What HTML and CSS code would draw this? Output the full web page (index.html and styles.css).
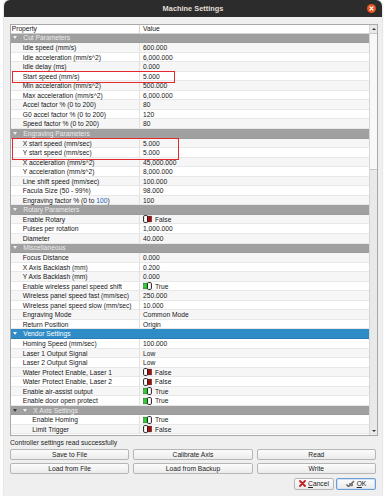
FILE: index.html
```html
<!DOCTYPE html>
<html lang="en">
<head>
    <meta charset="UTF-8">
    <title>Machine Settings</title>
    <link rel="stylesheet" href="styles.css">
</head>
<body>
    <div class="dialog">
        <div class="titlebar">
            <span></span>
            <span class="title">Machine Settings</span>
            <span class="close">
                <svg width="9" height="9" viewBox="0 0 9 9"><path d="M3 3 L6 6 M6 3 L3 6" stroke="#fff" stroke-width="1.2" stroke-linecap="round"/></svg>
            </span>
        </div>

        <div class="content">
            <div class="tree">
                <div class="rows">
                    <div class="row head"><div class="prop">Property</div><div class="val">Value</div></div>

                    <div class="row group"><i class="arrow"></i>Cut Parameters</div>
                    <div class="row"><div class="prop">Idle speed (mm/s)</div><div class="val">600.000</div></div>
                    <div class="row"><div class="prop">Idle acceleration (mm/s^2)</div><div class="val">6,000.000</div></div>
                    <div class="row"><div class="prop">Idle delay (ms)</div><div class="val">0.000</div></div>
                    <div class="row mark"><div class="prop">Start speed (mm/s)</div><div class="val">5.000</div></div>
                    <div class="row"><div class="prop">Min acceleration (mm/s^2)</div><div class="val">500.000</div></div>
                    <div class="row"><div class="prop">Max acceleration (mm/s^2)</div><div class="val">6,000.000</div></div>
                    <div class="row"><div class="prop">Accel factor % (0 to 200)</div><div class="val">80</div></div>
                    <div class="row"><div class="prop">G0 accel factor % (0 to 200)</div><div class="val">120</div></div>
                    <div class="row"><div class="prop">Speed factor % (0 to 200)</div><div class="val">80</div></div>

                    <div class="row group"><i class="arrow"></i>Engraving Parameters</div>
                    <div class="row mark2"><div class="prop">X start speed (mm/sec)</div><div class="val">5.000</div></div>
                    <div class="row"><div class="prop">Y start speed (mm/sec)</div><div class="val">5.000</div></div>
                    <div class="row"><div class="prop">X acceleration (mm/s^2)</div><div class="val">45,000.000</div></div>
                    <div class="row"><div class="prop">Y acceleration (mm/s^2)</div><div class="val">8,000.000</div></div>
                    <div class="row"><div class="prop">Line shift speed (mm/sec)</div><div class="val">100.000</div></div>
                    <div class="row"><div class="prop">Facula Size (50 - 99%)</div><div class="val">98.000</div></div>
                    <div class="row"><div class="prop">Engraving factor % (0 to <span class="num">100</span>)</div><div class="val">100</div></div>

                    <div class="row group"><i class="arrow"></i>Rotary Parameters</div>
                    <div class="row"><div class="prop">Enable Rotary</div><div class="val"><svg class="sw" width="9" height="8" viewBox="0 0 9 8"><rect x="0.6" y="0.6" width="4" height="6.8" rx="1" fill="#fff" stroke="#1c1c1c" stroke-width="1"/><rect x="4.6" y="1.2" width="3.8" height="5.6" fill="#9a1212" stroke="#4a0606" stroke-width="0.6"/></svg>False</div></div>
                    <div class="row"><div class="prop">Pulses per rotation</div><div class="val">1,000.000</div></div>
                    <div class="row"><div class="prop">Diameter</div><div class="val">40.000</div></div>

                    <div class="row group"><i class="arrow"></i>Miscellaneous</div>
                    <div class="row"><div class="prop">Focus Distance</div><div class="val">0.000</div></div>
                    <div class="row"><div class="prop">X Axis Backlash (mm)</div><div class="val">0.200</div></div>
                    <div class="row"><div class="prop">Y Axis Backlash (mm)</div><div class="val">0.000</div></div>
                    <div class="row"><div class="prop">Enable wireless panel speed shift</div><div class="val"><svg class="sw" width="9" height="8" viewBox="0 0 9 8"><rect x="0.6" y="1.2" width="3.8" height="5.6" fill="#2fcf2f" stroke="#187018" stroke-width="0.6"/><rect x="4.4" y="0.6" width="4" height="6.8" rx="1" fill="#fff" stroke="#1c1c1c" stroke-width="1"/></svg>True</div></div>
                    <div class="row"><div class="prop">Wireless panel speed fast (mm/sec)</div><div class="val">250.000</div></div>
                    <div class="row"><div class="prop">Wireless panel speed slow (mm/sec)</div><div class="val">10.000</div></div>
                    <div class="row"><div class="prop">Engraving Mode</div><div class="val">Common Mode</div></div>
                    <div class="row"><div class="prop">Return Position</div><div class="val">Origin</div></div>

                    <div class="row group selected"><i class="arrow"></i>Vendor Settings</div>
                    <div class="row"><div class="prop">Homing Speed (mm/sec)</div><div class="val">100.000</div></div>
                    <div class="row"><div class="prop">Laser 1 Output Signal</div><div class="val">Low</div></div>
                    <div class="row"><div class="prop">Laser 2 Output Signal</div><div class="val">Low</div></div>
                    <div class="row"><div class="prop">Water Protect Enable, Laser 1</div><div class="val"><svg class="sw" width="9" height="8" viewBox="0 0 9 8"><rect x="0.6" y="0.6" width="4" height="6.8" rx="1" fill="#fff" stroke="#1c1c1c" stroke-width="1"/><rect x="4.6" y="1.2" width="3.8" height="5.6" fill="#9a1212" stroke="#4a0606" stroke-width="0.6"/></svg>False</div></div>
                    <div class="row"><div class="prop">Water Protect Enable, Laser 2</div><div class="val"><svg class="sw" width="9" height="8" viewBox="0 0 9 8"><rect x="0.6" y="0.6" width="4" height="6.8" rx="1" fill="#fff" stroke="#1c1c1c" stroke-width="1"/><rect x="4.6" y="1.2" width="3.8" height="5.6" fill="#9a1212" stroke="#4a0606" stroke-width="0.6"/></svg>False</div></div>
                    <div class="row"><div class="prop">Enable air-assist output</div><div class="val"><svg class="sw" width="9" height="8" viewBox="0 0 9 8"><rect x="0.6" y="1.2" width="3.8" height="5.6" fill="#2fcf2f" stroke="#187018" stroke-width="0.6"/><rect x="4.4" y="0.6" width="4" height="6.8" rx="1" fill="#fff" stroke="#1c1c1c" stroke-width="1"/></svg>True</div></div>
                    <div class="row"><div class="prop">Enable door open protect</div><div class="val"><svg class="sw" width="9" height="8" viewBox="0 0 9 8"><rect x="0.6" y="1.2" width="3.8" height="5.6" fill="#2fcf2f" stroke="#187018" stroke-width="0.6"/><rect x="4.4" y="0.6" width="4" height="6.8" rx="1" fill="#fff" stroke="#1c1c1c" stroke-width="1"/></svg>True</div></div>

                    <div class="row group sub"><i class="arrow dark"></i><i class="arrow"></i>X Axis Settings</div>
                    <div class="row deep"><div class="prop">Enable Homing</div><div class="val"><svg class="sw" width="9" height="8" viewBox="0 0 9 8"><rect x="0.6" y="1.2" width="3.8" height="5.6" fill="#2fcf2f" stroke="#187018" stroke-width="0.6"/><rect x="4.4" y="0.6" width="4" height="6.8" rx="1" fill="#fff" stroke="#1c1c1c" stroke-width="1"/></svg>True</div></div>
                    <div class="row deep"><div class="prop">Limit Trigger</div><div class="val"><svg class="sw" width="9" height="8" viewBox="0 0 9 8"><rect x="0.6" y="0.6" width="4" height="6.8" rx="1" fill="#fff" stroke="#1c1c1c" stroke-width="1"/><rect x="4.6" y="1.2" width="3.8" height="5.6" fill="#9a1212" stroke="#4a0606" stroke-width="0.6"/></svg>False</div></div>
                </div>

                <div class="scrollbar">
                    <div class="sb-btn"><i class="up"></i></div>
                    <div class="thumb"></div>
                    <div class="track"></div>
                    <div class="sb-btn"><i class="down"></i></div>
                </div>
            </div>

            <div class="status">Controller settings read successfully</div>

            <div class="buttons">
                <button>Save to File</button>
                <button>Calibrate Axis</button>
                <button>Read</button>
                <button>Load from File</button>
                <button>Load from Backup</button>
                <button>Write</button>
            </div>

            <div class="dialog-buttons">
                <button class="icon-btn">
                    <svg width="7" height="7" viewBox="0 0 7 7"><path d="M1 1 L6 6 M6 1 L1 6" stroke="#c62020" stroke-width="1.8" stroke-linecap="round"/></svg>
                    <span><u>C</u>ancel</span>
                </button>
                <button class="icon-btn default">
                    <svg width="9" height="7" viewBox="0 0 9 7"><path d="M0.5 4.5 L2.5 6.5 L8 1" fill="none" stroke="#6a6a6a" stroke-width="1.6"/><rect x="3" y="3" width="4" height="3.2" rx="1" fill="#7a7a7a"/></svg>
                    <span><u>O</u>K</span>
                </button>
            </div>
        </div>
    </div>
</body>
</html>
```

FILE: styles.css
```css
* {
    box-sizing: border-box;
}
body {
    margin: 0;
    background: #fff;
    font-family: "Liberation Sans", Arial, sans-serif;
    font-size: 6.7px;
    color: #161616;
}
.dialog {
    width: 378px;
    height: 496px;
    margin-left: 4px;
    background: #efefef;
    border-radius: 6px 6px 0 0;
    box-shadow: 0 0 2px rgba(0,0,0,0.35);
    overflow: hidden;
    display: flex;
    flex-direction: column;
}
.titlebar {
    height: 17px;
    background: #2c2c2c;
    display: grid;
    grid-template-columns: 1fr auto 1fr;
    align-items: center;
}
.title {
    color: #e2ded6;
    font-weight: bold;
    font-size: 7.4px;
}
.close {
    justify-self: end;
    margin-right: 6px;
    width: 9px;
    height: 9px;
    border-radius: 50%;
    background: #e8561f;
    display: flex;
}
.content {
    padding: 7px 4px 0 6px;
    display: flex;
    flex-direction: column;
}
.tree {
    height: 412px;
    border: 1px solid #a9a9a9;
    background: #fff;
    display: flex;
}
.rows {
    flex: 1;
    display: flex;
    flex-direction: column;
}
.row {
    height: 9.55px;
    line-height: 9px;
    display: grid;
    grid-template-columns: 129px 1fr;
    border-bottom: 1px solid #e8e8e8;
    white-space: nowrap;
    position: relative;
}
.row:nth-child(odd) {
    background: #f6f6f6;
}
.prop {
    padding-left: 11.7px;
    border-right: 1px solid #e2e2e2;
    overflow: hidden;
}
.val {
    padding-left: 3px;
    display: flex;
    align-items: center;
}
.row.head {
    height: 8.5px;
    line-height: 8px;
    background: #fff;
    border-bottom: 1px solid #d2d2d2;
}
.row.head .prop {
    padding-left: 0.7px;
    border-right-color: #d6d6d6;
}
.row.deep .prop {
    padding-left: 21.3px;
}
.row.group {
    display: flex;
    align-items: center;
    background: #a0a0a0;
    color: #ececec;
    padding-left: 2.3px;
    border-bottom: 1px solid #9a9a9a;
}
.row.group.selected {
    background: #308cc6;
    color: #fff;
    border-bottom-color: #2a7db2;
}
.arrow {
    width: 0;
    height: 0;
    border-left: 2px solid transparent;
    border-right: 2px solid transparent;
    border-top: 3px solid #eeeeee;
    margin-right: 6px;
}
.arrow.dark {
    border-top-color: #3a3a3a;
}
.num {
    color: #1c5fb8;
}
.sw {
    margin-right: 3px;
}
.mark::after,
.mark2::after {
    content: "";
    position: absolute;
    z-index: 2;
    left: 1px;
    top: -0.5px;
    height: 10px;
    width: 161px;
    border: 1.6px solid #e5282b;
}
.mark2::after {
    width: 165px;
    height: 19.5px;
}
.scrollbar {
    width: 8px;
    background: #e9e9e9;
    border-left: 1px solid #d6d6d6;
    display: flex;
    flex-direction: column;
}
.sb-btn {
    height: 8px;
    display: flex;
    align-items: center;
    justify-content: center;
}
.up, .down {
    width: 0;
    height: 0;
    border-left: 2px solid transparent;
    border-right: 2px solid transparent;
}
.up {
    border-bottom: 2.5px solid #333;
}
.down {
    border-top: 2.5px solid #333;
}
.thumb {
    height: 137px;
    background: #f8f8f8;
    border-top: 1px solid #c8c8c8;
    border-bottom: 1px solid #c8c8c8;
}
.track {
    flex: 1;
}
.status {
    margin-top: 1.5px;
    height: 9px;
    line-height: 9px;
    color: #222;
}
button {
    font-family: inherit;
    font-size: 6.7px;
    color: #222;
    background: linear-gradient(#fcfcfc, #ebebeb);
    border: 1px solid #b6b6b6;
    border-radius: 2px;
    padding: 0;
}
.buttons {
    margin-top: 2.5px;
    margin-right: 2px;
    display: grid;
    grid-template-columns: repeat(3, 1fr);
    grid-auto-rows: 11px;
    column-gap: 4px;
    row-gap: 3px;
}
.dialog-buttons {
    margin-top: 3.5px;
    margin-right: 2px;
    display: flex;
    justify-content: flex-end;
    gap: 2px;
}
.icon-btn {
    width: 40px;
    height: 12px;
    display: flex;
    align-items: center;
    justify-content: center;
    gap: 2px;
}
.icon-btn.default {
    border-color: #6e9cd4;
    box-shadow: inset 0 0 0 1px #d3e3f6;
}
```
